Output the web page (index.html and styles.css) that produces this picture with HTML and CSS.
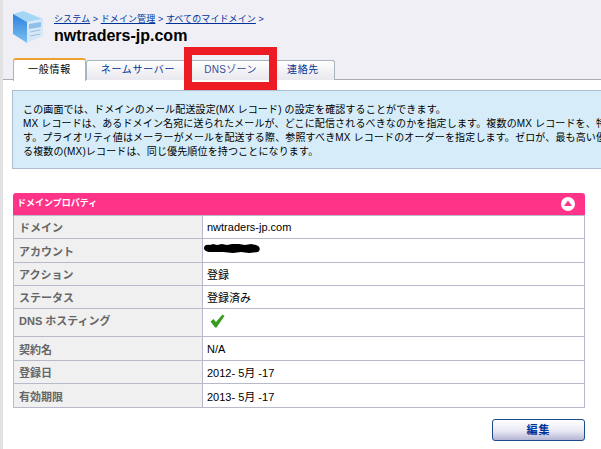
FILE: index.html
```html
<!DOCTYPE html>
<html lang="ja">
<head>
  <meta charset="UTF-8">
  <title>nwtraders-jp.com</title>
  <link rel="stylesheet" href="styles.css">
</head>
<body>
  <div class="page">
    <div class="top">
      <div class="heading">
        <svg class="server-icon" width="31" height="33" viewBox="0 0 31 33">
          <defs>
            <linearGradient id="sideFill" x1="0" y1="0" x2="0" y2="1">
              <stop offset="0" stop-color="#2b82dc"/>
              <stop offset="1" stop-color="#7cc0f2"/>
            </linearGradient>
          </defs>
          <polygon points="0,3 10,0 30,8 14,11" fill="#a6d6f6"/>
          <polygon points="0,3 14,11 14,32 0,23" fill="url(#sideFill)"/>
          <polygon points="14,11 30,8 30,25 14,32" fill="#d6e8f7"/>
          <polygon points="16,13 28,11 28,16 16,18" fill="#8fc0ea"/>
          <line x1="17" y1="21" x2="27" y2="19" stroke="#9cc0de"/>
          <line x1="17" y1="25" x2="27" y2="23" stroke="#9cc0de"/>
        </svg>
        <div class="heading-text">
          <div class="crumbs"><a href="#">システム</a> &gt; <a href="#">ドメイン管理</a> &gt; <a href="#">すべてのマイドメイン</a> &gt;</div>
          <h1>nwtraders-jp.com</h1>
        </div>
      </div>
      <div class="tabs">
        <a class="tab tab-active" href="#">一般情報</a>
        <a class="tab tab-ns" href="#">ネームサーバー</a>
        <a class="tab tab-dns" href="#">DNSゾーン</a>
        <a class="tab tab-contact" href="#">連絡先</a>
      </div>
    </div>

    <div class="info">
      <p>この画面では、ドメインのメール配送設定(MX レコード) の設定を確認することができます。</p>
      <p>MX レコードは、あるドメイン名宛に送られたメールが、どこに配信されるべきなのかを指定します。複数のMX レコードを、特定の</p>
      <p>す。プライオリティ値はメーラーがメールを配送する際、参照すべきMX レコードのオーダーを指定します。ゼロが、最も高い優先</p>
      <p>る複数の(MX)レコードは、同じ優先順位を持つことになります。</p>
    </div>

    <div class="panel">
      <div class="panel-title">
        <span class="panel-label">ドメインプロパティ</span>
        <svg width="14" height="14" viewBox="0 0 14 14">
          <circle cx="7" cy="7" r="7" fill="#fff"/>
          <polygon points="7,3.5 11,9 3,9" fill="#ff3388"/>
        </svg>
      </div>
      <table class="props">
        <tr class="r23"><th>ドメイン</th><td>nwtraders-jp.com</td></tr>
        <tr class="r24"><th>アカウント</th><td>
          <svg class="blot" width="58" height="10" viewBox="0 0 58 10"><path d="M1 5C1 2 4 1 7 2L10 1L14 2L19 1L24 2L29 1L36 1L42 2L48 1L53 2C57 3 58 7 55 9L46 10L38 9L30 10L20 9L8 9C3 9 1 7 1 5Z" fill="#000"/></svg>
        </td></tr>
        <tr class="r23"><th>アクション</th><td>登録</td></tr>
        <tr class="r23"><th>ステータス</th><td>登録済み</td></tr>
        <tr class="r28"><th class="top-cell">DNS ホスティング</th><td>
          <svg class="check" width="15" height="14" viewBox="0 0 15 14"><path d="M0.5 7.5L3.5 5L6 8L12.5 0.5L14.5 2L6.5 13.5H5Z" fill="#3a9c1e"/></svg>
        </td></tr>
        <tr class="r24"><th>契約名</th><td>N/A</td></tr>
        <tr class="r23"><th>登録日</th><td>2012- 5月 -17</td></tr>
        <tr class="r24"><th>有効期限</th><td>2013- 5月 -17</td></tr>
      </table>
    </div>

    <div class="actions">
      <button class="btn" type="button">編集</button>
    </div>
  </div>

  <!-- red highlight over the DNS tab -->
  <div class="highlight"></div>
</body>
</html>
```

FILE: styles.css
```css
html, body {
  margin: 0;
  height: 100%;
  overflow: hidden;
}
body {
  font-family: "Liberation Sans", "Noto Sans CJK JP", sans-serif;
  font-size: 11px;
  color: #000;
  background-color: #fff;
}
.page {
  border-left: 3px solid #e2e2e2;
  height: 449px;
  box-sizing: border-box;
}
.top {
  background-color: #efeff5;
  height: 80px;
  box-sizing: border-box;
  border-bottom: 1px solid #a9a9b5;
  padding: 11px 0 0 10px;
}
.heading {
  display: flex;
  height: 47px;
}
.server-icon {
  margin-right: 10px;
}
.heading-text {
  padding-top: 1px;
}
.crumbs {
  font-size: 9px;
  line-height: 14px;
  letter-spacing: 0.1px;
  color: #003399;
}
.crumbs a {
  color: #003399;
}
h1 {
  margin: 0;
  font-size: 16px;
  line-height: 19px;
  font-weight: bold;
}
.tabs {
  display: flex;
  align-items: flex-end;
  height: 22px;
}
.tab {
  display: block;
  box-sizing: border-box;
  height: 20px;
  line-height: 18px;
  text-align: center;
  text-decoration: none;
  color: #003399;
  font-size: 10px;
  letter-spacing: 0.7px;
  background: linear-gradient(#ffffff, #e8e8ee);
  border: 1px solid #a9b4bf;
  border-bottom: none;
  border-radius: 3px 3px 0 0;
}
.tab-active {
  width: 73px;
  height: 23px;
  margin-bottom: -1px;
  line-height: 19px;
  color: #000;
  background: #fff;
  border-top: 2px solid #f0a030;
  position: relative;
}
.tab-ns {
  width: 104px;
}
.tab-dns {
  width: 81px;
  letter-spacing: 0.3px;
  color: #334f99;
}
.tab-contact {
  width: 64px;
}
.info {
  margin: 10px 0 0 9px;
  width: 700px;
  height: 79px;
  box-sizing: border-box;
  padding: 12px 10px 0;
  background-color: #d6edf9;
  border: 1px solid #b0bccf;
}
.info p {
  margin: 0;
  font-size: 10px;
  letter-spacing: 0.15px;
  line-height: 14px;
  white-space: nowrap;
}
.panel {
  margin: 24px 0 0 10px;
  width: 572px;
}
.panel-title {
  display: flex;
  justify-content: space-between;
  align-items: center;
  height: 22px;
  box-sizing: border-box;
  padding: 0 10px 0 4px;
  background-color: #ff3388;
  border-radius: 3px 3px 0 0;
  color: #fff;
  font-weight: bold;
  font-size: 9px;
}
.panel-label {
  margin-top: -3px;
}
.props {
  width: 572px;
  border-collapse: collapse;
  table-layout: fixed;
}
.props th, .props td {
  border: 1px solid #b9b9cc;
  padding: 0 4px 0 5px;
  text-align: left;
  font-size: 11px;
  vertical-align: middle;
}
.props th {
  width: 179px;
  background-color: #f0f0f0;
  color: #666;
  font-weight: bold;
}
.props th.top-cell {
  vertical-align: top;
  padding-top: 3px;
}
.props td {
  color: #000;
  padding-left: 4px;
}
.r23 {
  height: 23px;
}
.r24 {
  height: 24px;
}
.r28 {
  height: 28px;
}
.blot, .check {
  display: block;
}
.blot {
  margin: -5px 0 0 -4px;
}
.check {
  margin: -3px 0 0 3px;
}
.actions {
  display: flex;
  justify-content: flex-end;
  width: 582px;
  margin-top: 11px;
}
.btn {
  width: 93px;
  height: 22px;
  padding: 0 0 2px;
  font-family: inherit;
  font-size: 11px;
  font-weight: bold;
  color: #003399;
  letter-spacing: 1px;
  background: linear-gradient(#ffffff, #e8e8f4 55%, #b4b4d4);
  border: 1px solid #1d4a8a;
  border-radius: 3px;
}
.highlight {
  position: absolute;
  left: 184px;
  top: 47px;
  width: 93px;
  height: 43px;
  box-sizing: border-box;
  border: 8px solid #ed1c24;
}
```
